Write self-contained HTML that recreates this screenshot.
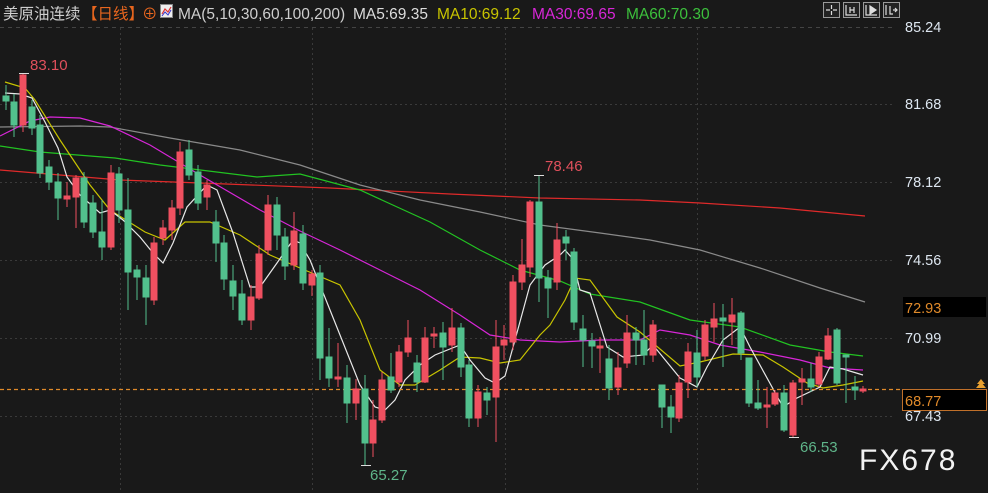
<!DOCTYPE html>
<html><head><meta charset="utf-8"><style>
html,body{margin:0;padding:0;background:#191919;}
svg{display:block;}
text{font-family:"Liberation Sans","Noto Sans CJK SC",sans-serif;}
</style></head><body>
<svg width="988" height="493" viewBox="0 0 988 493" xmlns="http://www.w3.org/2000/svg">
<rect width="988" height="493" fill="#191919"/>
<g stroke="#3a3a3a" stroke-width="1" stroke-dasharray="2,3">
<line x1="0" y1="104.5" x2="895" y2="104.5"/><line x1="0" y1="182.5" x2="895" y2="182.5"/>
<line x1="0" y1="260.5" x2="895" y2="260.5"/><line x1="0" y1="338.5" x2="895" y2="338.5"/>
<line x1="0" y1="416.5" x2="895" y2="416.5"/>
<line x1="120.5" y1="28" x2="120.5" y2="493"/><line x1="312.5" y1="28" x2="312.5" y2="493"/>
<line x1="505.5" y1="28" x2="505.5" y2="493"/><line x1="697.5" y1="28" x2="697.5" y2="493"/>
</g>
<line x1="0" y1="27.5" x2="895" y2="27.5" stroke="#444" stroke-dasharray="4,4"/>
<g fill="none" stroke-width="1.2">
<polyline stroke="#e02a2a" points="0,170 120,180 200,183 330,188 450,194 540,198 640,200 700,203 780,208 865,216"/>
<polyline stroke="#8a8a8a" points="0,127 80,126 110,127 170,138 240,150 300,165 360,185 420,200 480,212 540,225 600,233 650,240 700,250 760,268 820,288 865,302"/>
<polyline stroke="#22c322" points="0,146 40,152 115,158 160,165 257,177 300,174 360,190 430,222 480,250 520,270 560,281 590,294 640,302 690,320 740,327 790,345 830,352 863,356"/>
<polyline stroke="#d826d8" points="0,136 30,121 50,117 80,118 110,126 150,145 200,175 260,210 300,231 340,250 380,270 420,290 460,315 490,335 520,340 560,342 600,340 640,340 660,330 690,335 720,345 760,352 800,360 830,368 863,370"/>
<polyline stroke="#c8c400" points="5,82 25,88 35,100 60,140 90,185 110,210 145,232 165,240 185,222 210,222 240,235 270,255 300,268 340,285 360,320 380,370 400,385 415,385 440,370 460,357 480,358 500,363 520,360 540,335 550,325 565,300 575,278 590,280 617,317 640,332 680,366 700,362 733,354 763,355 783,367 807,383 823,388 843,385 863,381"/>
<polyline stroke="#e8e8e8" points="5,93 20,94 32,98 45,122 58,148 67,177 80,195 100,213 110,210 123,220 140,237 153,253 163,263 173,243 187,207 207,185 217,190 233,233 250,287 260,287 277,263 293,240 300,243 310,260 330,310 360,385 375,407 385,410 395,400 405,380 420,365 435,355 460,345 470,360 485,378 495,383 505,376 515,340 530,285 545,265 560,255 565,250 572,258 580,290 590,293 607,347 623,357 643,355 653,345 680,378 697,387 707,367 723,340 740,327 750,347 783,407 797,398 820,387 830,367 843,369 863,375"/>
</g>
<line x1="0" y1="389.5" x2="900" y2="389.5" stroke="#e08a2a" stroke-width="1.3" stroke-dasharray="4,3"/>
<g stroke-width="1">
<g stroke="#52c08d" fill="#52c08d">
<line x1="6" y1="85" x2="6" y2="110"/><rect x="3" y="96" width="6" height="5"/>
<line x1="14" y1="94" x2="14" y2="137"/><rect x="11" y="102" width="6" height="23"/>
<line x1="32" y1="100" x2="32" y2="135"/><rect x="29" y="107" width="6" height="21"/>
<line x1="40" y1="115" x2="40" y2="178"/><rect x="37" y="125" width="6" height="48"/>
<line x1="49" y1="160" x2="49" y2="190"/><rect x="46" y="167" width="6" height="15"/>
<line x1="58" y1="173" x2="58" y2="220"/><rect x="55" y="182" width="6" height="16"/>
<line x1="84" y1="172" x2="84" y2="228"/><rect x="81" y="178" width="6" height="44"/>
<line x1="93" y1="195" x2="93" y2="238"/><rect x="90" y="203" width="6" height="29"/>
<line x1="102" y1="200" x2="102" y2="260"/><rect x="99" y="232" width="6" height="15"/>
<line x1="119" y1="167" x2="119" y2="223"/><rect x="116" y="174" width="6" height="36"/>
<line x1="128" y1="178" x2="128" y2="310"/><rect x="125" y="210" width="6" height="62"/>
<line x1="137" y1="265" x2="137" y2="300"/><rect x="134" y="270" width="6" height="7"/>
<line x1="146" y1="265" x2="146" y2="325"/><rect x="143" y="278" width="6" height="19"/>
<line x1="189" y1="140" x2="189" y2="180"/><rect x="186" y="150" width="6" height="25"/>
<line x1="198" y1="165" x2="198" y2="210"/><rect x="195" y="172" width="6" height="31"/>
<line x1="216" y1="210" x2="216" y2="262"/><rect x="213" y="222" width="6" height="21"/>
<line x1="224" y1="235" x2="224" y2="290"/><rect x="221" y="243" width="6" height="36"/>
<line x1="233" y1="265" x2="233" y2="310"/><rect x="230" y="281" width="6" height="15"/>
<line x1="242" y1="280" x2="242" y2="325"/><rect x="239" y="294" width="6" height="26"/>
<line x1="277" y1="197" x2="277" y2="250"/><rect x="274" y="205" width="6" height="30"/>
<line x1="285" y1="228" x2="285" y2="280"/><rect x="282" y="237" width="6" height="29"/>
<line x1="303" y1="225" x2="303" y2="290"/><rect x="300" y="234" width="6" height="49"/>
<line x1="320" y1="265" x2="320" y2="380"/><rect x="317" y="273" width="6" height="85"/>
<line x1="329" y1="328" x2="329" y2="387"/><rect x="326" y="357" width="6" height="21"/>
<line x1="347" y1="365" x2="347" y2="423"/><rect x="344" y="378" width="6" height="25"/>
<line x1="365" y1="375" x2="365" y2="465"/><rect x="362" y="389" width="6" height="54"/>
<line x1="391" y1="353" x2="391" y2="393"/><rect x="388" y="377" width="6" height="13"/>
<line x1="417" y1="355" x2="417" y2="392"/><rect x="414" y="363" width="6" height="19"/>
<line x1="443" y1="322" x2="443" y2="380"/><rect x="440" y="333" width="6" height="14"/>
<line x1="461" y1="323" x2="461" y2="377"/><rect x="458" y="328" width="6" height="39"/>
<line x1="469" y1="360" x2="469" y2="427"/><rect x="466" y="365" width="6" height="53"/>
<line x1="487" y1="387" x2="487" y2="415"/><rect x="484" y="393" width="6" height="7"/>
<line x1="539" y1="175" x2="539" y2="302"/><rect x="536" y="202" width="6" height="76"/>
<line x1="548" y1="270" x2="548" y2="318"/><rect x="545" y="278" width="6" height="10"/>
<line x1="566" y1="230" x2="566" y2="260"/><rect x="563" y="237" width="6" height="6"/>
<line x1="574" y1="248" x2="574" y2="330"/><rect x="571" y="252" width="6" height="70"/>
<line x1="583" y1="315" x2="583" y2="367"/><rect x="580" y="329" width="6" height="11"/>
<line x1="592" y1="333" x2="592" y2="368"/><rect x="589" y="341" width="6" height="5"/>
<line x1="609" y1="345" x2="609" y2="400"/><rect x="606" y="359" width="6" height="29"/>
<line x1="636" y1="327" x2="636" y2="365"/><rect x="633" y="333" width="6" height="7"/>
<line x1="644" y1="310" x2="644" y2="365"/><rect x="641" y="340" width="6" height="15"/>
<line x1="662" y1="385" x2="662" y2="428"/><rect x="659" y="385" width="6" height="22"/>
<line x1="671" y1="395" x2="671" y2="433"/><rect x="668" y="407" width="6" height="10"/>
<line x1="697" y1="330" x2="697" y2="387"/><rect x="694" y="353" width="6" height="24"/>
<line x1="723" y1="304" x2="723" y2="367"/><rect x="720" y="318" width="6" height="3"/>
<line x1="741" y1="311" x2="741" y2="360"/><rect x="738" y="313" width="6" height="40"/>
<line x1="749" y1="358" x2="749" y2="407"/><rect x="746" y="358" width="6" height="45"/>
<line x1="758" y1="380" x2="758" y2="410"/><rect x="755" y="403" width="6" height="5"/>
<line x1="784" y1="385" x2="784" y2="432"/><rect x="781" y="393" width="6" height="37"/>
<line x1="811" y1="363" x2="811" y2="392"/><rect x="808" y="379" width="6" height="8"/>
<line x1="837" y1="328" x2="837" y2="385"/><rect x="834" y="330" width="6" height="53"/>
<line x1="846" y1="355" x2="846" y2="403"/><rect x="843" y="355" width="6" height="2"/>
<line x1="855" y1="376" x2="855" y2="400"/><rect x="852" y="387" width="6" height="3"/>
</g>
<g stroke="#ef5060" fill="#ef5060">
<line x1="23" y1="73" x2="23" y2="132"/><rect x="20" y="75" width="6" height="50"/>
<line x1="67" y1="182" x2="67" y2="207"/><rect x="64" y="196" width="6" height="3"/>
<line x1="76" y1="175" x2="76" y2="228"/><rect x="73" y="178" width="6" height="19"/>
<line x1="111" y1="165" x2="111" y2="250"/><rect x="108" y="173" width="6" height="74"/>
<line x1="154" y1="237" x2="154" y2="305"/><rect x="151" y="243" width="6" height="57"/>
<line x1="163" y1="220" x2="163" y2="245"/><rect x="160" y="228" width="6" height="10"/>
<line x1="172" y1="200" x2="172" y2="240"/><rect x="169" y="208" width="6" height="22"/>
<line x1="180" y1="142" x2="180" y2="215"/><rect x="177" y="152" width="6" height="56"/>
<line x1="207" y1="180" x2="207" y2="210"/><rect x="204" y="185" width="6" height="12"/>
<line x1="251" y1="285" x2="251" y2="330"/><rect x="248" y="297" width="6" height="23"/>
<line x1="259" y1="245" x2="259" y2="300"/><rect x="256" y="254" width="6" height="44"/>
<line x1="268" y1="195" x2="268" y2="255"/><rect x="265" y="205" width="6" height="45"/>
<line x1="294" y1="212" x2="294" y2="270"/><rect x="291" y="231" width="6" height="34"/>
<line x1="312" y1="270" x2="312" y2="296"/><rect x="309" y="274" width="6" height="11"/>
<line x1="338" y1="343" x2="338" y2="387"/><rect x="335" y="377" width="6" height="2"/>
<line x1="356" y1="379" x2="356" y2="420"/><rect x="353" y="389" width="6" height="14"/>
<line x1="373" y1="400" x2="373" y2="457"/><rect x="370" y="420" width="6" height="23"/>
<line x1="382" y1="372" x2="382" y2="423"/><rect x="379" y="380" width="6" height="40"/>
<line x1="399" y1="345" x2="399" y2="387"/><rect x="396" y="352" width="6" height="30"/>
<line x1="408" y1="320" x2="408" y2="357"/><rect x="405" y="338" width="6" height="14"/>
<line x1="425" y1="327" x2="425" y2="383"/><rect x="422" y="338" width="6" height="44"/>
<line x1="434" y1="327" x2="434" y2="348"/><rect x="431" y="334" width="6" height="2"/>
<line x1="452" y1="308" x2="452" y2="352"/><rect x="449" y="328" width="6" height="17"/>
<line x1="478" y1="385" x2="478" y2="427"/><rect x="475" y="392" width="6" height="26"/>
<line x1="496" y1="320" x2="496" y2="442"/><rect x="493" y="347" width="6" height="50"/>
<line x1="504" y1="325" x2="504" y2="360"/><rect x="501" y="340" width="6" height="5"/>
<line x1="513" y1="275" x2="513" y2="350"/><rect x="510" y="282" width="6" height="60"/>
<line x1="522" y1="239" x2="522" y2="290"/><rect x="519" y="265" width="6" height="17"/>
<line x1="530" y1="200" x2="530" y2="277"/><rect x="527" y="202" width="6" height="65"/>
<line x1="557" y1="223" x2="557" y2="290"/><rect x="554" y="240" width="6" height="42"/>
<line x1="600" y1="337" x2="600" y2="373"/><rect x="597" y="346" width="6" height="2"/>
<line x1="618" y1="352" x2="618" y2="395"/><rect x="615" y="368" width="6" height="19"/>
<line x1="627" y1="315" x2="627" y2="368"/><rect x="624" y="333" width="6" height="30"/>
<line x1="653" y1="320" x2="653" y2="362"/><rect x="650" y="325" width="6" height="30"/>
<line x1="679" y1="375" x2="679" y2="422"/><rect x="676" y="383" width="6" height="35"/>
<line x1="688" y1="343" x2="688" y2="398"/><rect x="685" y="352" width="6" height="30"/>
<line x1="705" y1="320" x2="705" y2="360"/><rect x="702" y="325" width="6" height="31"/>
<line x1="714" y1="303" x2="714" y2="342"/><rect x="711" y="319" width="6" height="8"/>
<line x1="732" y1="298" x2="732" y2="345"/><rect x="729" y="315" width="6" height="7"/>
<line x1="767" y1="387" x2="767" y2="428"/><rect x="764" y="405" width="6" height="2"/>
<line x1="775" y1="390" x2="775" y2="406"/><rect x="772" y="393" width="6" height="11"/>
<line x1="793" y1="380" x2="793" y2="437"/><rect x="790" y="383" width="6" height="52"/>
<line x1="802" y1="368" x2="802" y2="405"/><rect x="799" y="379" width="6" height="3"/>
<line x1="819" y1="352" x2="819" y2="387"/><rect x="816" y="357" width="6" height="27"/>
<line x1="828" y1="328" x2="828" y2="360"/><rect x="825" y="336" width="6" height="23"/>
<line x1="863" y1="386" x2="863" y2="393"/><rect x="860" y="389" width="6" height="2"/>
</g>
</g>
<g stroke="#ddd"><line x1="19" y1="73.5" x2="29" y2="73.5"/><line x1="534" y1="175.5" x2="544" y2="175.5"/><line x1="361" y1="465.5" x2="371" y2="465.5"/><line x1="789" y1="437.5" x2="799" y2="437.5"/></g>
<g font-size="15">
<text x="30" y="70" fill="#e0505c">83.10</text>
<text x="545" y="171" fill="#e0505c">78.46</text>
<text x="370" y="480" fill="#5fb58a">65.27</text>
<text x="800" y="452" fill="#5fb58a">66.53</text>
</g>
<g font-size="15.5">
<text x="3" y="19" fill="#cfcfcf">美原油连续</text>
<text x="82" y="19" fill="#e8661e">【日线】</text>
<text x="142" y="19" fill="#e8661e">⊕</text>
<rect x="160.5" y="4.5" width="12" height="13" fill="#eee" stroke="#888"/>
<polyline points="162,14 165,9 168,12 171,7" fill="none" stroke="#d33" stroke-width="1.2"/>
<polyline points="162,16 165,12 168,15 171,10" fill="none" stroke="#33c" stroke-width="1"/>
<text x="178" y="19" fill="#cfcfcf">MA(5,10,30,60,100,200)</text>
<text x="353" y="19" fill="#dcdcdc">MA5:69.35</text>
<text x="437" y="19" fill="#c8c400">MA10:69.12</text>
<text x="532" y="19" fill="#d826d8">MA30:69.65</text>
<text x="626" y="19" fill="#3cc03c">MA60:70.30</text>
</g>
<g fill="#222" stroke="#9a9a9a" stroke-width="1">
<rect x="823.5" y="2.5" width="16" height="15"/><rect x="843.5" y="2.5" width="16" height="15"/>
<rect x="863.5" y="2.5" width="16" height="15"/><rect x="883.5" y="2.5" width="16" height="15"/>
</g>
<g stroke="#ddd" fill="none" stroke-width="1.2">
<path d="M831.5 5v4M831.5 11v4M826 10h4M833 10h4"/>
<path d="M846 5v10h11M850 7v6M854 7v6M850 10h4"/>
<path d="M866 5v10h11"/><path d="M870 6l6 4-6 4z" fill="#ddd"/>
<path d="M886 5v10M890 6v8h3M893 10h4M895 8l2 2-2 2"/>
</g>
<g font-size="14.5" fill="#dde6f0">
<text x="905" y="32">85.24</text>
<text x="905" y="109">81.68</text>
<text x="905" y="187">78.12</text>
<text x="905" y="265">74.56</text>
<text x="905" y="343">70.99</text>
<text x="905" y="421">67.43</text>
</g>
<rect x="903" y="297" width="83" height="20" fill="#000"/>
<text x="905" y="313" font-size="14.5" fill="#e08a2a">72.93</text>
<rect x="902.5" y="389.5" width="84" height="21" fill="#000" stroke="#c0702a"/>
<text x="905" y="406" font-size="14.5" fill="#e08a2a">68.77</text>
<path d="M976 388l5-6 5 6zM977 384l4-5 4 5z" fill="#e8a030"/>
<text x="859" y="470" font-size="30" fill="#f2f2f2" letter-spacing="2">FX678</text>
</svg>
</body></html>
